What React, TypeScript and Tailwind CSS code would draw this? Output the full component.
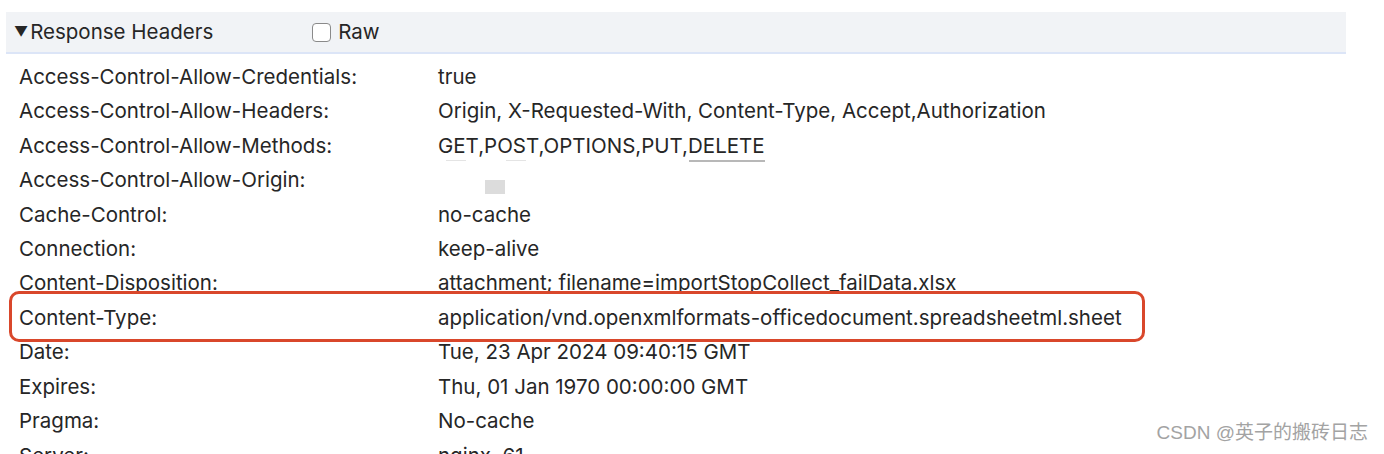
import React from 'react';

const rows: [string, string][] = [
  ['Access-Control-Allow-Credentials:', 'true'],
  ['Access-Control-Allow-Headers:', 'Origin, X-Requested-With, Content-Type, Accept,Authorization'],
  ['Access-Control-Allow-Methods:', 'GET,POST,OPTIONS,PUT,DELETE'],
  ['Access-Control-Allow-Origin:', ''],
  ['Cache-Control:', 'no-cache'],
  ['Connection:', 'keep-alive'],
  ['Content-Disposition:', 'attachment; filename=importStopCollect_failData.xlsx'],
  ['Content-Type:', 'application/vnd.openxmlformats-officedocument.spreadsheetml.sheet'],
  ['Date:', 'Tue, 23 Apr 2024 09:40:15 GMT'],
  ['Expires:', 'Thu, 01 Jan 1970 00:00:00 GMT'],
  ['Pragma:', 'No-cache'],
  ['Server:', 'nginx, 61'],
];

export default function App() {
  return (
    <div
      className="relative w-[1384px] h-[454px] overflow-hidden bg-white text-[#262626]"
      style={{ fontFamily: 'Inter, "Noto Sans", sans-serif' }}
    >
      <div className="pt-3 pl-[6px] w-[1346px]">
        {/* Section header */}
        <div className="flex items-center h-[42px] bg-[#f1f3f6] border-b-2 border-[#dce5f7] text-[20.5px]">
          <span className="ml-2 mr-[2px] text-[14px] leading-none">▼</span>
          <span className="w-[282px]">Response Headers</span>
          <span className="w-[19px] h-[19px] rounded-[4px] border border-[#8a8a8a] bg-white mr-[7px]" />
          <span>Raw</span>
        </div>

        {/* Header rows */}
        <div className="pt-[6px] pl-[13px] text-[20.5px]">
          {rows.map(([name, value]) => {
            const highlighted = name === 'Content-Type:';
            return (
              <div key={name} className="relative flex h-[34.45px] items-center">
                {highlighted && (
                  <span className="absolute -left-[10px] -top-[10px] w-[1136px] h-[51px] rounded-[10px] border-[3px] border-[#d9472b] bg-white" />
                )}
                <span className="relative w-[419px] shrink-0 whitespace-nowrap">{name}</span>
                <span className="relative whitespace-nowrap">{value}</span>
                {name === 'Access-Control-Allow-Origin:' && (
                  <span className="absolute left-[466px] top-[17px] w-[20px] h-[14px] bg-[#dcdcdc]" />
                )}
                {name === 'Access-Control-Allow-Methods:' && (
                  <>
                    <span className="absolute left-[427px] top-[31px] w-[20px] h-[1px] bg-[#e4e4e4]" />
                    <span className="absolute left-[487px] top-[31px] w-[20px] h-[1px] bg-[#e4e4e4]" />
                    <span className="absolute left-[670px] top-[31px] w-[76px] h-[2px] bg-[#b8b8b8]" />
                  </>
                )}
              </div>
            );
          })}
        </div>
      </div>

      <div
        className="absolute right-[16px] bottom-[7px] text-[19px] text-[#a3a3a3]"
        style={{
          fontFamily: '"Liberation Sans", "Noto Sans CJK SC", sans-serif',
          textShadow: '0 0 2px #fff, 0 0 2px #fff',
        }}
      >
        CSDN @英子的搬砖日志
      </div>
    </div>
  );
}
